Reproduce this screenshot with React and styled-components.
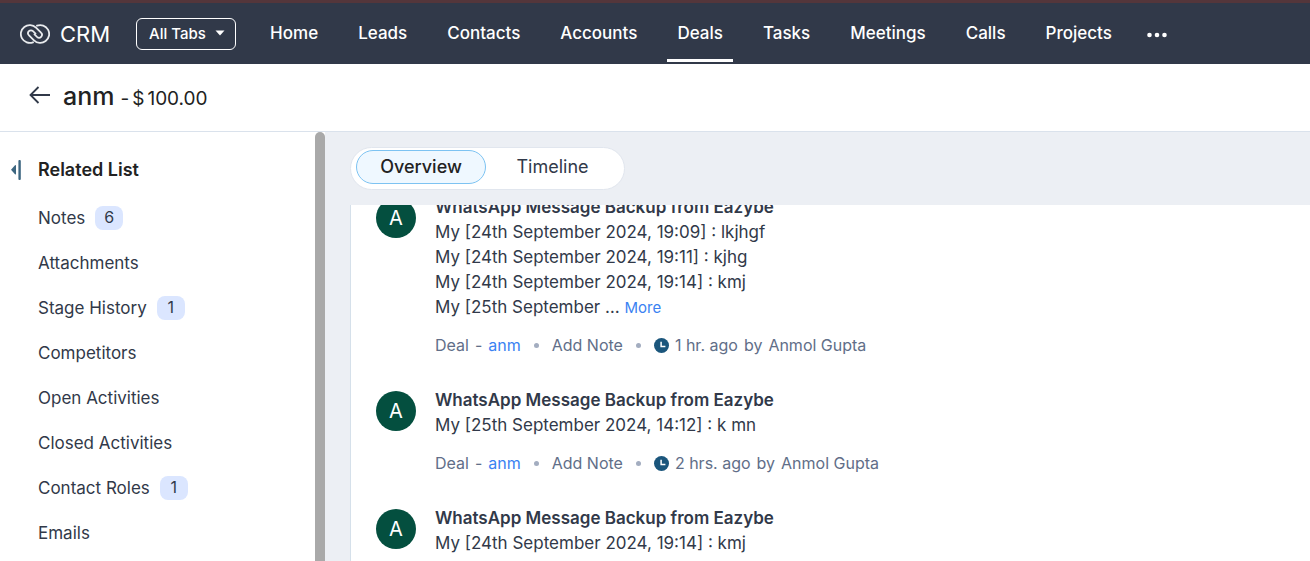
import React, { useState } from "react";
import styled, { createGlobalStyle } from "styled-components";

const GlobalStyle = createGlobalStyle`
  * {
    box-sizing: border-box;
  }
  body {
    margin: 0;
    background: #fff;
    color: #313949;
    font-family: Inter, "Liberation Sans", sans-serif;
    font-size: 17px;
  }
  a {
    color: inherit;
    text-decoration: none;
  }
  button {
    border: none;
    background: none;
    padding: 0;
    color: inherit;
    font: inherit;
    cursor: pointer;
  }
`;

const Page = styled.div`
  display: flex;
  flex-direction: column;
  height: 100vh;
  overflow: hidden;
`;

const Header = styled.header`
  display: flex;
  align-items: center;
  flex-shrink: 0;
  height: 64px;
  padding-left: 20px;
  border-top: 3px solid #54363b;
  background: #313949;
  color: #fff;
`;

const Brand = styled.a`
  display: flex;
  align-items: center;
  gap: 10px;
  font-size: 22px;
`;

const TabsPicker = styled.label`
  position: relative;
  margin: 0 24px 0 26px;
`;

const TabsSelect = styled.select`
  appearance: none;
  width: 100px;
  height: 32px;
  padding: 0 12px 1px;
  border: 1px solid #fff;
  border-radius: 6px;
  background: transparent;
  color: #fff;
  font: 500 15px Inter, "Liberation Sans", sans-serif;
`;

const Caret = styled.svg`
  position: absolute;
  top: 12px;
  right: 11px;
  pointer-events: none;
`;

const Nav = styled.nav`
  display: flex;
  align-items: center;
  gap: 20px;
`;

const NavLink = styled.a`
  display: flex;
  align-items: center;
  height: 58px;
  margin-bottom: 1px;
  padding: 0 10px;
  border-top: 2px solid transparent;
  border-bottom: 3px solid ${({ $active }) => ($active ? "#fff" : "transparent")};
  font-weight: 500;
`;

const MoreButton = styled.button`
  display: flex;
  padding: 2px 4px 0;
`;

const TitleBar = styled.div`
  display: flex;
  align-items: center;
  gap: 12px;
  flex-shrink: 0;
  height: 68px;
  padding: 0 28px 4px;
  border-bottom: 1px solid #dae2ec;
`;

const BackButton = styled.button`
  display: flex;
`;

const DealTitle = styled.h1`
  display: flex;
  align-items: baseline;
  gap: 6px;
  margin: 0;
  color: #222;
  font-size: 25px;
  font-weight: 500;
`;

const Amount = styled.span`
  display: flex;
  gap: 3px;
  font-size: 19px;
  font-weight: 400;
`;

const Body = styled.div`
  display: flex;
  flex: 1;
  min-height: 0;
`;

const Sidebar = styled.aside`
  width: 315px;
  flex-shrink: 0;
  padding: 17px 0 0 11px;
  overflow: hidden;
`;

const SidebarHead = styled.div`
  display: flex;
  align-items: center;
  gap: 17px;
  height: 41px;
  margin-bottom: 5px;
`;

const SidebarTitle = styled.h2`
  margin: 0;
  color: #222;
  font-size: 18px;
  font-weight: 600;
`;

const RelatedList = styled.ul`
  margin: 0;
  padding: 0 0 0 27px;
  list-style: none;
`;

const RelatedItem = styled.li`
  display: flex;
  align-items: center;
  gap: 10px;
  height: 45px;
`;

const Count = styled.span`
  min-width: 28px;
  padding-bottom: 2px;
  border-radius: 8px;
  background: #dbe6ff;
  font-size: 16px;
  line-height: 22px;
  text-align: center;
`;

const ScrollThumb = styled.div`
  width: 10px;
  flex-shrink: 0;
  border-radius: 5px 5px 0 0;
  background: #a9a9a9;
`;

const Main = styled.main`
  display: flex;
  flex-direction: column;
  flex: 1;
  min-width: 0;
  padding-left: 25px;
  background: #eceff4;
`;

const SwitchBar = styled.div`
  flex-shrink: 0;
  padding: 15px 0;
`;

const Switch = styled.div`
  display: inline-flex;
  padding: 2px 5px 5px;
  border: 1px solid #e1e6ee;
  border-radius: 22px;
  background: #fff;
  vertical-align: top;
`;

const SwitchButton = styled.button`
  width: ${({ $active }) => ($active ? 130 : 133)}px;
  height: 34px;
  padding-bottom: 2px;
  border: 1px solid ${({ $active }) => ($active ? "#7dc3f2" : "transparent")};
  border-radius: 17px;
  background: ${({ $active }) => ($active ? "#eff8ff" : "transparent")};
  color: ${({ $active }) => ($active ? "#222" : "#313949")};
  font-size: 18px;
  font-weight: ${({ $active }) => ($active ? 500 : 400)};
`;

const Feed = styled.div`
  flex: 1;
  min-height: 0;
  padding-left: 25px;
  border-left: 1px solid #d5e0ea;
  background: #fff;
  overflow: hidden;
`;

/* the feed is scrolled a little, so the first note starts under the switch */
const FeedInner = styled.div`
  margin-top: -10px;
`;

const Note = styled.article`
  display: flex;
  gap: 19px;
  margin-bottom: 30px;
`;

const Avatar = styled.div`
  width: 40px;
  height: 40px;
  flex-shrink: 0;
  margin-top: 3px;
  border-radius: 50%;
  background: #044f3f;
  color: #fff;
  font-size: 20px;
  line-height: 40px;
  text-align: center;
`;

const NoteTitle = styled.h3`
  margin: 0;
  font-size: 17px;
  font-weight: 600;
  line-height: 25px;
`;

const NoteLine = styled.p`
  margin: 0;
  line-height: 25px;
`;

const MoreLink = styled.a`
  color: #3a82f2;
  font-size: 15px;
`;

const Meta = styled.div`
  display: flex;
  align-items: center;
  gap: 6px;
  margin-top: 13px;
  color: #616e88;
  font-size: 16px;
  line-height: 25px;
`;

const DealLink = styled.a`
  color: #3a82f2;
`;

const Dot = styled.span`
  width: 5px;
  height: 5px;
  margin: 0 7px;
  border-radius: 50%;
  background: #a3adc0;
`;

const tabs = ["Home", "Leads", "Contacts", "Accounts", "Deals", "Tasks", "Meetings", "Calls", "Projects"];

const relatedLists = [
  { name: "Notes", count: 6 },
  { name: "Attachments" },
  { name: "Stage History", count: 1 },
  { name: "Competitors" },
  { name: "Open Activities" },
  { name: "Closed Activities" },
  { name: "Contact Roles", count: 1 },
  { name: "Emails" },
];

const notes = [
  {
    lines: [
      "My [24th September 2024, 19:09] : lkjhgf",
      "My [24th September 2024, 19:11] : kjhg",
      "My [24th September 2024, 19:14] : kmj",
      "My [25th September …",
    ],
    more: true,
    time: "1 hr. ago",
  },
  { lines: ["My [25th September 2024, 14:12] : k mn"], time: "2 hrs. ago" },
  { lines: ["My [24th September 2024, 19:14] : kmj"] },
];

const LogoIcon = () => (
  <svg width="30" height="20" viewBox="0 0 30 20" fill="none" stroke="#e9ebee" strokeWidth="1.8" strokeLinecap="round">
    <path d="M13 18.3A8.9 8.9 0 1 1 16 3.7L21 8.7A2.9 2.9 0 0 1 17 12.9L14.5 10.4" />
    <path d="M17 1.7A8.9 8.9 0 1 1 14 16.3L9 11.3A2.9 2.9 0 0 1 13 7.1L15.5 9.6" />
  </svg>
);

const BackIcon = () => (
  <svg width="23" height="20" viewBox="0 0 23 20" fill="none" stroke="#313949" strokeWidth="1.8">
    <path d="M22 9H2.5M10.5 1L2.5 9L10.5 17" />
  </svg>
);

const CollapseIcon = () => (
  <svg width="10" height="20" viewBox="0 0 10 20" fill="#3d6680">
    <path d="M0 9.7L4 5.2Q5 4.4 5 6V13.6Q5 15 4 14.2Z" />
    <rect x="7.4" width="2.4" height="20" rx="1" />
  </svg>
);

const ClockIcon = () => (
  <svg width="15" height="15" viewBox="0 0 15 15">
    <circle cx="7.5" cy="7.5" r="7.5" fill="#1b567c" />
    <path d="M7.1 3.8V8.4H11.4" fill="none" stroke="#fff" strokeWidth="1.5" />
  </svg>
);

const NoteCard = ({ note }) => (
  <Note>
    <Avatar>A</Avatar>
    <div>
      <NoteTitle>WhatsApp Message Backup from Eazybe</NoteTitle>
      {note.lines.map((line, i) => (
        <NoteLine key={line}>
          {line} {note.more && i === note.lines.length - 1 && <MoreLink href="#more">More</MoreLink>}
        </NoteLine>
      ))}
      {note.time && (
        <Meta>
          <span>Deal</span>
          <span>-</span>
          <DealLink href="#anm">anm</DealLink>
          <Dot />
          <button type="button">Add Note</button>
          <Dot />
          <ClockIcon />
          <span>{note.time}</span>
          <span>by</span>
          <span>Anmol Gupta</span>
        </Meta>
      )}
    </div>
  </Note>
);

const App = () => {
  const [activeTab, setActiveTab] = useState("Deals");
  const [view, setView] = useState("Overview");

  return (
    <Page>
      <GlobalStyle />
      <Header>
        <Brand href="#crm">
          <LogoIcon />
          CRM
        </Brand>
        <TabsPicker>
          <TabsSelect aria-label="Tab group">
            <option>All Tabs</option>
          </TabsSelect>
          <Caret width="10" height="6" viewBox="0 0 10 6" fill="#fff">
            <path d="M0.5 0.5H9.5L5 5.5Z" />
          </Caret>
        </TabsPicker>
        <Nav>
          {tabs.map((tab) => (
            <NavLink key={tab} href={`#${tab}`} $active={tab === activeTab} onClick={() => setActiveTab(tab)}>
              {tab}
            </NavLink>
          ))}
          <MoreButton type="button" aria-label="More tabs">
            <svg width="22" height="6" viewBox="0 0 22 6" fill="#fff">
              <circle cx="3.5" cy="3" r="2.3" />
              <circle cx="11" cy="3" r="2.3" />
              <circle cx="18.5" cy="3" r="2.3" />
            </svg>
          </MoreButton>
        </Nav>
      </Header>

      <TitleBar>
        <BackButton type="button" aria-label="Back">
          <BackIcon />
        </BackButton>
        <DealTitle>
          anm
          <Amount>
            <span>-</span>
            <span>$</span>
            <span>100.00</span>
          </Amount>
        </DealTitle>
      </TitleBar>

      <Body>
        <Sidebar>
          <SidebarHead>
            <BackButton type="button" aria-label="Collapse related list">
              <CollapseIcon />
            </BackButton>
            <SidebarTitle>Related List</SidebarTitle>
          </SidebarHead>
          <RelatedList>
            {relatedLists.map((item) => (
              <RelatedItem key={item.name}>
                <a href={`#${item.name}`}>{item.name}</a>
                {item.count && <Count>{item.count}</Count>}
              </RelatedItem>
            ))}
          </RelatedList>
        </Sidebar>
        <ScrollThumb />
        <Main>
          <SwitchBar>
            <Switch>
              {["Overview", "Timeline"].map((name) => (
                <SwitchButton key={name} type="button" $active={name === view} onClick={() => setView(name)}>
                  {name}
                </SwitchButton>
              ))}
            </Switch>
          </SwitchBar>
          <Feed>
            <FeedInner>
              {notes.map((note, i) => (
                <NoteCard key={i} note={note} />
              ))}
            </FeedInner>
          </Feed>
        </Main>
      </Body>
    </Page>
  );
};

export default App;
